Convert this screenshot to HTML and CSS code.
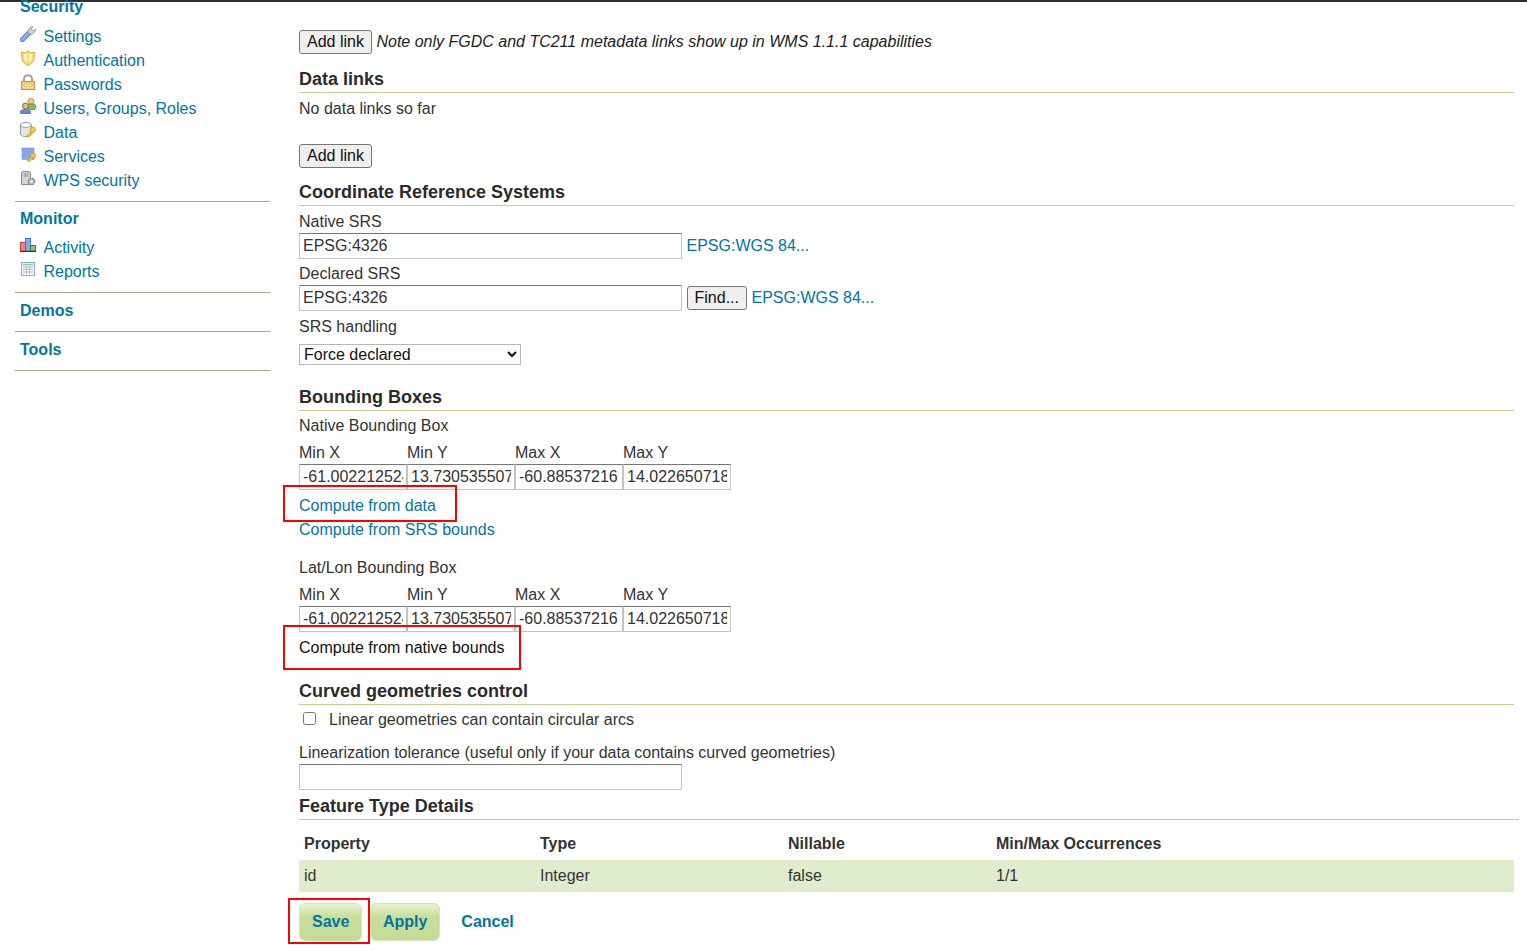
FILE: index.html
```html
<!DOCTYPE html>
<html lang="en">
<head>
    <meta charset="UTF-8">
    <meta name="viewport" content="width=device-width, initial-scale=1.0">
    <title>Edit Layer</title>
    <link rel="stylesheet" href="styles.css">
</head>
<body>
<div class="topbar"></div>
<div class="page">
    <div class="sidebar">
        <div class="group">
            <h3 class="group-title first">Security</h3>
            <ul class="menu">
                <li><svg class="icon" viewBox="0 0 16 16"><path d="M2.500 13.500 L9.500 6.500" stroke="#5a7fcc" stroke-width="5" stroke-linecap="round"/><path d="M2.500 13.500 L9.500 6.500" stroke="#8fb0ec" stroke-width="3" stroke-linecap="round"/><path d="M8.500 7.500 C7 4.500 9.500 0.500 13 0.500 L11 3 L13 5 L15.500 3 C16 7 12 9.500 8.500 7.500 Z" fill="#d4d4d4" stroke="#8f8f8f" stroke-width=".8"/></svg><a href="#">Settings</a></li>
                <li><svg class="icon" viewBox="0 0 16 16"><path d="M1.500 2 L5 3 L8 1 L11 3 L14.500 2 L14 9 C13.500 12 10.500 14.500 8 15.500 C5.500 14.500 2.500 12 2 9 Z" fill="#f7dc6c" stroke="#dca94a"/><path d="M4 4.500 L8 3.500 L12 4.500 L11.500 9 C11 11 9.500 12.500 8 13 C6.500 12.500 5 11 4.500 9 Z" fill="#fff6c4"/><path d="M8 3.500 V13" stroke="#f3d25a" stroke-width="1.500"/></svg><a href="#">Authentication</a></li>
                <li><svg class="icon" viewBox="0 0 16 16"><path d="M4 8 V5 C4 0 12 0 12 5 V8" fill="none" stroke="#a2a2a2" stroke-width="2"/><rect x="1.500" y="7.500" width="13" height="8" fill="#f8cd74" stroke="#d98d2c"/><rect x="3" y="9" width="10" height="5" fill="#fbdc98"/><rect x="4" y="10" width="3" height="2.500" fill="#fff6dc" stroke="#c98a34" stroke-width=".5"/><rect x="9" y="10" width="3" height="2.500" fill="#fff6dc" stroke="#c98a34" stroke-width=".5"/></svg><a href="#">Passwords</a></li>
                <li><svg class="icon" viewBox="0 0 16 16"><circle cx="11" cy="3.200" r="3" fill="#f3c48c" stroke="#c98a3c" stroke-width=".8"/><rect x="8" y="6" width="7.500" height="5.500" rx="1.500" fill="#7dbb5f" stroke="#4f8a3a" stroke-width=".7"/><circle cx="5.500" cy="8" r="3" fill="#e9b98c" stroke="#7a4a28" stroke-width=".8"/><path d="M0.500 15.500 V13.500 C0.500 10.800 10.500 10.800 10.500 13.500 V15.500 Z" fill="#5f8ad9" stroke="#3f64ac" stroke-width=".7"/></svg><a href="#">Users, Groups, Roles</a></li>
                <li><svg class="icon" viewBox="0 0 16 16"><path d="M0.500 3 V12 C0.500 15.500 11.500 15.500 11.500 12 V3 Z" fill="#e6e6e6" stroke="#a0a0a0"/><ellipse cx="6" cy="3" rx="5.500" ry="2.500" fill="#f8f8f8" stroke="#a0a0a0"/><circle cx="12.800" cy="7.800" r="2.700" fill="#f5c93f" stroke="#c99524" stroke-width=".8"/><path d="M11 9.500 L6.500 14 L8 15.500 L12.500 11 Z" fill="#f5c93f" stroke="#c99524" stroke-width=".8"/></svg><a href="#">Data</a></li>
                <li><svg class="icon" viewBox="0 0 16 16"><rect x="2" y="2" width="12" height="11.500" fill="#86a6ea" stroke="#7a9ae0" stroke-width=".6"/><circle cx="13" cy="9.500" r="2.500" fill="#f5c93f" stroke="#c99524" stroke-width=".8"/><path d="M11.500 11 L7 14.500 L8.500 16 L13 12.500 Z" fill="#f5c93f" stroke="#c99524" stroke-width=".8"/></svg><a href="#">Services</a></li>
                <li><svg class="icon" viewBox="0 0 16 16"><path d="M1.500 2.500 L3 1.500 H9.500 L10.500 3 V14.500 H1.500 Z" fill="#d4d4d4" stroke="#8c8c8c"/><path d="M3.500 4 H8.500 M3.500 6 H8.500" stroke="#8c8c8c"/><circle cx="11.500" cy="11.500" r="3.200" fill="#bcbcbc" stroke="#7c7c7c" stroke-width="1.400" stroke-dasharray="1.600 .9"/><circle cx="11.500" cy="11.500" r="1.200" fill="#fff"/></svg><a href="#">WPS security</a></li>
            </ul>
        </div>
        <div class="group">
            <h3 class="group-title">Monitor</h3>
            <ul class="menu">
                <li><svg class="icon" viewBox="0 0 16 16"><rect x="0.500" y="5.500" width="5" height="8.500" fill="#f47c7c" stroke="#d23c3c"/><rect x="5.500" y="1.500" width="5" height="12.500" fill="#7fa8ee" stroke="#4070c4"/><rect x="10.500" y="8.500" width="5" height="5.500" fill="#8cc08c" stroke="#3c7c3c"/><path d="M0 14.500 H16" stroke="#30305a"/></svg><a href="#">Activity</a></li>
                <li><svg class="icon" viewBox="0 0 16 16"><rect x="1.500" y="1.500" width="13" height="13" fill="#eef2fb" stroke="#8fa8d4"/><path d="M3 3.500 H13" stroke="#8ccf7c" stroke-width="1.500"/><path d="M3 6 H13 M3 8.500 H13 M3 11 H13 M6.500 5.500 V13 M9.500 5.500 V13" stroke="#a8b4c8" stroke-width=".8"/></svg><a href="#">Reports</a></li>
            </ul>
        </div>
        <div class="group"><h3 class="group-title solo">Demos</h3></div>
        <div class="group"><h3 class="group-title solo">Tools</h3></div>
    </div>

    <div class="content">
        <div class="row note-row">
            <button type="button" class="btn">Add link</button>
            <em>Note only FGDC and TC211 metadata links show up in WMS 1.1.1 capabilities</em>
        </div>

        <h3 class="section data-links">Data links</h3>
        <p class="line no-links">No data links so far</p>
        <div class="row add-row"><button type="button" class="btn">Add link</button></div>

        <h3 class="section crs">Coordinate Reference Systems</h3>
        <label class="line native-label">Native SRS</label>
        <div class="row srs-row">
            <input class="field wide" type="text" value="EPSG:4326">
            <a href="#">EPSG:WGS 84...</a>
        </div>
        <label class="line declared-label">Declared SRS</label>
        <div class="row srs-row">
            <input class="field wide" type="text" value="EPSG:4326">
            <button type="button" class="btn find">Find...</button>
            <a href="#">EPSG:WGS 84...</a>
        </div>
        <label class="line handling-label">SRS handling</label>
        <select class="picker"><option>Force declared</option></select>

        <h3 class="section boxes">Bounding Boxes</h3>
        <label class="line box-label">Native Bounding Box</label>
        <div class="bbox">
            <span>Min X</span><span>Min Y</span><span>Max X</span><span>Max Y</span>
            <input class="field" type="text" value="-61.00221252441406">
            <input class="field" type="text" value="13.730535507202148">
            <input class="field" type="text" value="-60.88537216">
            <input class="field" type="text" value="14.022650718688965">
        </div>
        <p class="line compute"><a href="#" class="marked mark-data">Compute from data</a></p>
        <p class="line"><a href="#">Compute from SRS bounds</a></p>

        <label class="line box-label latlon">Lat/Lon Bounding Box</label>
        <div class="bbox">
            <span>Min X</span><span>Min Y</span><span>Max X</span><span>Max Y</span>
            <input class="field" type="text" value="-61.00221252441406">
            <input class="field" type="text" value="13.730535507202148">
            <input class="field" type="text" value="-60.88537216">
            <input class="field" type="text" value="14.022650718688965">
        </div>
        <p class="line compute"><a href="#" class="marked mark-native plain">Compute from native bounds</a></p>

        <h3 class="section curved">Curved geometries control</h3>
        <label class="check-row"><input type="checkbox"> Linear geometries can contain circular arcs</label>
        <label class="line tolerance-label">Linearization tolerance (useful only if your data contains curved geometries)</label>
        <input class="field wide block" type="text">

        <h3 class="section details">Feature Type Details</h3>
        <table class="attrs">
            <thead>
                <tr><th class="c1">Property</th><th class="c2">Type</th><th class="c3">Nillable</th><th>Min/Max Occurrences</th></tr>
            </thead>
            <tbody>
                <tr><td>id</td><td>Integer</td><td>false</td><td>1/1</td></tr>
            </tbody>
        </table>

        <div class="actions">
            <a href="#" class="action marked mark-save">Save</a>
            <a href="#" class="action">Apply</a>
            <a href="#" class="cancel">Cancel</a>
        </div>
    </div>
</div>
</body>
</html>
```

FILE: styles.css
```css
html, body {
    height: 950px;
    overflow: hidden;
}
body {
    margin: 0;
    background: #fff;
    color: #333;
    font-family: "Liberation Sans", Arial, sans-serif;
    font-size: 16px;
}
a {
    color: #0076a1;
    text-decoration: none;
}
.topbar {
    height: 2px;
    background: #2e3038;
}
.page {
    display: flex;
    align-items: flex-start;
}

/* left menu */
.sidebar {
    width: 255px;
    margin-left: 15px;
    flex-shrink: 0;
}
.group {
    border-bottom: 1px solid #a3ad8c;
}
.group-title {
    margin: 0;
    padding: 8px 5px 0;
    color: #0076a1;
    font-size: 16px;
    line-height: 18px;
}
.group-title.first {
    padding-top: 0;
    margin-top: -4px;
}
.group-title.solo {
    padding: 9px 5px 11px;
}
.menu {
    list-style: none;
    margin: 0;
    padding: 8px 5px 8px;
}
.group:first-child .menu {
    padding-top: 9px;
}
.menu li {
    display: flex;
    height: 24px;
    line-height: 24px;
}
.menu a {
    margin-left: 7.500px;
}
.icon {
    width: 16px;
    height: 16px;
    flex-shrink: 0;
    margin-top: 1px;
}

/* form */
.content {
    margin-left: 29px;
    width: 1215px;
}
.row {
    display: flex;
    align-items: center;
}
.btn {
    font-family: inherit;
    font-size: 16px;
    color: #111;
    height: 24px;
    padding: 0 7px;
    background: #efefef;
    border: 1px solid #767676;
    border-radius: 3px;
}
.note-row {
    margin-top: 28px;
    height: 24px;
    gap: 4.500px;
}
.note-row em {
    color: #222;
}
.section {
    margin: 0;
    font-size: 18px;
    line-height: 21px;
    color: #2b2b2b;
    border-bottom: 1px solid #c3d08f;
    padding-bottom: 2px;
}
.data-links { margin-top: 15px; }
.crs { margin-top: 14px; }
.boxes { margin-top: 22px; }
.curved { margin-top: 21px; }
.details { margin-top: 6px; margin-right: -5px; }
.line {
    display: block;
    margin: 0;
    line-height: 24px;
}
.no-links {
    margin-top: 4px;
}
.add-row {
    margin-top: 23px;
}
.native-label { margin-top: 4px; height: 15px; }
.srs-row {
    gap: 4.500px;
    margin-top: 11px;
}
.native-label + .srs-row {
    margin-top: 8px;
}
.declared-label { margin-top: 3px; height: 12px; }
.field {
    box-sizing: border-box;
    height: 26px;
    padding: 1px 3px;
    font-family: inherit;
    font-size: 16px;
    color: #333;
    background: #fff;
    border: 1px solid;
    border-color: #767676 #c4c4c4 #c4c4c4 #c4c4c4;
    border-radius: 0;
    min-width: 0;
    width: 108px;
}
.wide {
    width: 383px;
}
.block {
    display: block;
}
.handling-label { margin-top: 4px; }
.picker {
    display: block;
    margin-top: 5px;
    box-sizing: border-box;
    width: 222px;
    height: 21px;
    font-family: inherit;
    font-size: 16px;
    color: #111;
    background: #fff;
    border: 1px solid #b8b8b8;
    border-radius: 0;
}
.box-label { margin-top: 3px; }
.latlon { margin-top: 14px; }
.bbox {
    display: grid;
    grid-template-columns: repeat(4, 108px);
    grid-template-rows: 23px 26px;
    margin-top: 3px;
    line-height: 24px;
}
.compute {
    margin-top: 4px;
}
.plain {
    color: #111;
}
.check-row {
    display: flex;
    align-items: center;
    height: 24px;
    margin-top: 3px;
}
.check-row input {
    width: 13px;
    height: 13px;
    margin: 0 13px 4px 4px;
}
.tolerance-label { margin-top: 9px; height: 23px; }
.attrs {
    width: 100%;
    margin-top: 8px;
    border-collapse: collapse;
    table-layout: fixed;
}
.attrs th, .attrs td {
    padding: 0 5px;
    text-align: left;
    height: 32px;
}
.c1 { width: 226px; }
.c2 { width: 238px; }
.c3 { width: 198px; }
.attrs tbody tr {
    background: #e0edcc;
}
.actions {
    display: flex;
    align-items: center;
    margin-top: 11px;
    gap: 7.500px;
}
.action {
    display: block;
    height: 38px;
    line-height: 36px;
    padding: 0 12px;
    font-weight: bold;
    border: 1px solid #d5e3b5;
    border-radius: 6px;
    background: linear-gradient(#e9f3d4, #c8de9a 35%, #c5dc96);
    box-sizing: border-box;
}
.cancel {
    font-weight: bold;
    margin-left: 13.500px;
}

/* red annotation boxes */
.marked {
    position: relative;
}
.marked::after {
    content: "";
    position: absolute;
    border: 2px solid #f00;
}
.mark-data::after { left: -16px; right: -21px; top: -12px; bottom: -8px; }
.mark-native::after { left: -16px; right: -17px; top: -14px; bottom: -14px; }
.mark-save::after { left: -12px; right: -9px; top: -6px; bottom: -4px; }
```
